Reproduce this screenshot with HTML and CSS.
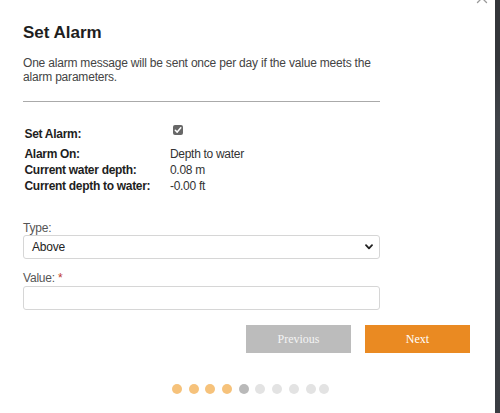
FILE: index.html
```html
<!DOCTYPE html>
<html>
<head>
<meta charset="utf-8">
<link rel="stylesheet" href="styles.css">
</head>
<body>
<div class="page">
  <div class="modal">
    <svg class="close" width="12" height="12" viewBox="0 0 12 12" aria-label="Close"><path d="M1.5 1.5 L10.5 10.5 M10.5 1.5 L1.5 10.5" stroke="#9a9a9a" stroke-width="1.3" stroke-linecap="round"/></svg>
    <h1 class="title">Set Alarm</h1>
    <p class="desc">One alarm message will be sent once per day if the value meets the alarm parameters.</p>
    <hr class="rule">
    <div class="info">
      <div class="lbl first">Set Alarm:</div>
      <div class="val first"><span class="check"><svg width="10" height="10" viewBox="0 0 10 10"><path d="M2.3 5.2 L4.2 7.1 L7.8 2.8" fill="none" stroke="#fff" stroke-width="1.5" stroke-linecap="round" stroke-linejoin="round"/></svg></span></div>
      <div class="lbl">Alarm On:</div>
      <div class="val">Depth to water</div>
      <div class="lbl">Current water depth:</div>
      <div class="val">0.08 m</div>
      <div class="lbl">Current depth to water:</div>
      <div class="val">-0.00 ft</div>
    </div>
    <div class="field type-field">
      <div class="flabel">Type:</div>
      <div class="select"><span>Above</span><svg class="chev" width="8" height="6" viewBox="0 0 8 6"><path d="M1 1.2 L4 4.4 L7 1.2" fill="none" stroke="#222" stroke-width="1.8" stroke-linecap="round" stroke-linejoin="round"/></svg></div>
    </div>
    <div class="field value-field">
      <div class="flabel">Value: <span class="req">*</span></div>
      <div class="input"></div>
    </div>
    <div class="actions">
      <button class="btn prev">Previous</button>
      <button class="btn next">Next</button>
    </div>
    <div class="dots">
      <span class="dot done"></span>
      <span class="dot done"></span>
      <span class="dot done"></span>
      <span class="dot done"></span>
      <span class="dot current"></span>
      <span class="dot"></span>
      <span class="dot"></span>
      <span class="dot"></span>
      <span class="dot"></span>
      <span class="dot last"></span>
    </div>
  </div>
  <div class="strip"></div>
</div>
</body>
</html>
```
FILE: styles.css
```css
html, body {
  margin: 0;
  padding: 0;
  background: #ffffff;
}
body {
  font-family: "Liberation Sans", Arial, sans-serif;
  color: #333;
}
.page {
  display: flex;
  width: 500px;
  height: 413px;
  overflow: hidden;
}
.modal {
  position: relative;
  width: 495px;
  box-sizing: border-box;
  padding: 23px 25px 0 23px;
  background: #fff;
}
.close {
  position: absolute;
  top: -8px;
  left: 476px;
  display: block;
}
.strip {
  width: 5px;
  background: linear-gradient(#34363a 0, #34363a 60px, #3f4348 120px, #3a3d42 100%);
}
.title {
  margin: 0;
  font-size: 17px;
  line-height: 20px;
  font-weight: bold;
  color: #1e1e1e;
}
.desc {
  margin: 14px 0 0;
  width: 357px;
  font-size: 12px;
  line-height: 13.5px;
  letter-spacing: -0.2px;
  color: #444;
}
.rule {
  margin: 17px 0 0;
  width: 357px;
  height: 0;
  border: 0;
  border-top: 1px solid #aaa;
}
.info {
  display: grid;
  grid-template-columns: 145.5px auto;
  margin-top: 23px;
  padding-left: 1.5px;
  font-size: 12px;
  line-height: 16px;
  letter-spacing: -0.3px;
}
.lbl {
  font-weight: bold;
  color: #1e1e1e;
}
.val {
  color: #333;
}
.lbl.first {
  padding: 1px 0 4px;
}
.val.first {
  padding-left: 3px;
}
.check {
  display: block;
  width: 10px;
  height: 10px;
  border-radius: 2px;
  background: #676767;
}
.check svg {
  display: block;
}
.field {
  width: 357px;
}
.type-field {
  margin-top: 27px;
}
.value-field {
  margin-top: 12px;
}
.flabel {
  font-size: 12px;
  line-height: 14px;
  letter-spacing: -0.2px;
  color: #555;
}
.req {
  color: #c0392b;
}
.select, .input {
  box-sizing: border-box;
  height: 24px;
  border: 1px solid #d6d6d6;
  border-radius: 3px;
  background: #fff;
}
.select {
  display: flex;
  align-items: center;
  justify-content: space-between;
  padding: 0 6px 0 8px;
  font-size: 12px;
  letter-spacing: -0.2px;
  color: #222;
}
.chev {
  display: block;
}
.input {
  margin-top: 1px;
}
.actions {
  display: flex;
  justify-content: flex-end;
  gap: 14px;
  margin-top: 15px;
}
.btn {
  width: 105px;
  height: 28px;
  border: 0;
  padding: 0;
  font-family: "Liberation Serif", "Times New Roman", serif;
  font-size: 12px;
  color: #fff;
}
.btn.prev {
  background: #bcbcbc;
  color: #f4f4f4;
}
.btn.next {
  background: #ea8a22;
}
.dots {
  display: flex;
  gap: 6.7px;
  margin: 31px 0 0 149px;
}
.dot {
  width: 10px;
  height: 10px;
  border-radius: 50%;
  background: #e3e3e3;
}
.dot.done {
  background: #f6c27b;
}
.dot.current {
  background: #b9b9b9;
}
.dot.last {
  margin-left: -3.4px;
}
```
